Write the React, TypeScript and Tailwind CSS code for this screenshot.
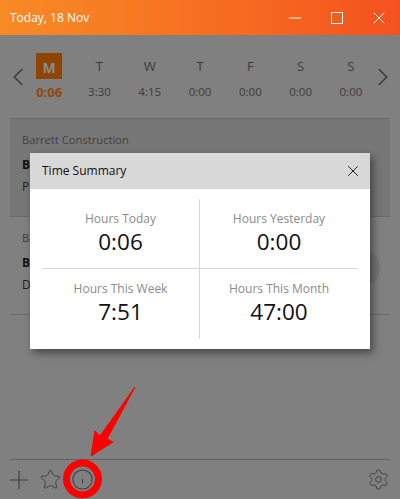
import { ChevronLeft, ChevronRight, Plus, Star, Info, Settings, X, Minus } from 'lucide-react';

const days = [
  { label: 'M', time: '0:06', active: true },
  { label: 'T', time: '3:30' },
  { label: 'W', time: '4:15' },
  { label: 'T', time: '0:00' },
  { label: 'F', time: '0:00' },
  { label: 'S', time: '0:00' },
  { label: 'S', time: '0:00' },
];

const summary = [
  { label: 'Hours Today', value: '0:06', cell: 'border-r border-b pt-[11px]' },
  { label: 'Hours Yesterday', value: '0:00', cell: 'border-b pt-[11px]' },
  { label: 'Hours This Week', value: '7:51', cell: 'border-r pt-[11px]' },
  { label: 'Hours This Month', value: '47:00', cell: 'pt-[11px]' },
];

function Entry({ title, bold, detail, shaded }: { title: string; bold: string; detail: string; shaded?: boolean }) {
  return (
    <div className={`h-[98px] border-b border-[#6a6a6a] px-3 pt-[12px] text-[11.2px] leading-[18px] ${shaded ? 'bg-[#777777]' : ''}`}>
      <div className="text-[#3f3f3f]">{title}</div>
      <div className="mt-[7px] text-[12px] font-bold text-[#111111]">{bold}</div>
      <div className="mt-[4px] text-[12px] text-[#1f1f1f]">{detail}</div>
    </div>
  );
}

export default function App() {
  return (
    <div className="relative flex h-[499px] w-[400px] flex-col overflow-hidden bg-[#808080] font-['Open_Sans','Noto_Sans',sans-serif]">
      {/* Title bar */}
      <header className="flex h-[35px] items-center justify-between bg-gradient-to-r from-[#f78b25] to-[#f4511e] pl-[10px] text-white">
        <span className="text-[12px]">Today, 18 Nov</span>
        <div className="flex items-center">
          <div className="flex w-[42px] justify-center"><Minus size={20} strokeWidth={1.2} /></div>
          <div className="flex w-[42px] justify-center"><div className="h-[12px] w-[12px] border border-white" /></div>
          <div className="flex w-[42px] justify-center"><X size={20} strokeWidth={1.2} /></div>
        </div>
      </header>

      {/* Week strip */}
      <div className="flex h-[83px] items-start pt-[18px] text-[#3c3c3c]">
        <ChevronLeft size={30} strokeWidth={1.3} className="mt-[9px] ml-[3px] shrink-0" />
        <div className="ml-[-9px] flex shrink-0">
          {days.map((day, i) => (
            <div key={i} className="flex w-[50.3px] flex-col items-center">
              <div className={`flex h-[26px] w-[26px] items-center justify-center pt-[2px] ${day.active ? 'bg-[#8f4500] text-[14px] font-bold text-[#8c8c8c]' : 'text-[13px]'}`}>
                {day.label}
              </div>
              <div className={`mt-[4px] leading-[18px] ${day.active ? 'text-[13px] font-bold text-[#8d4a10]' : 'text-[11.5px]'}`}>{day.time}</div>
            </div>
          ))}
        </div>
        <ChevronRight size={30} strokeWidth={1.3} className="mt-[9px] ml-[-8px] shrink-0" />
      </div>

      {/* Entries */}
      <div className="relative mx-[10px] border-t border-[#6a6a6a]">
        <Entry title="Barrett Construction" bold="B" detail="P" shaded />
        <Entry title="Ba" bold="B" detail="D" />
        <div className="absolute left-[334px] top-[131px] h-[36px] w-[36px] rounded-full bg-[#757575]" />
      </div>

      {/* Footer */}
      <div className="mx-[10px] mt-auto flex h-[40px] items-center border-t border-[#626262] text-[#3f3f3f]">
        <Plus size={30} strokeWidth={0.9} className="ml-[-6px]" />
        <Star size={23} strokeWidth={1} className="ml-[4.5px]" />
        <Info size={23} strokeWidth={1.1} className="ml-[9.5px]" />
        <Settings size={23} strokeWidth={1} className="ml-auto" />
      </div>

      {/* Annotation */}
      <svg className="absolute left-0 top-[379px]" width="140" height="120" viewBox="0 0 140 120" fill="none">
        <path d="M135 8 L100 57 L95 52 L91 77 L113 63 L107 60 Z" fill="#fe0000" stroke="#fe0000" strokeLinejoin="round" />
        <circle cx="82.5" cy="100" r="16" stroke="#fe0000" strokeWidth="7" />
      </svg>

      {/* Dialog */}
      <div className="absolute left-[30px] top-[153px] w-[340px] bg-white shadow-[3px_4px_8px_rgba(0,0,0,0.45)]">
        <div className="flex h-[36px] items-center justify-between bg-[#d8d8d8] pl-3 pr-[8px] text-[#111111]">
          <span className="text-[12px] font-medium">Time Summary</span>
          <X size={18} strokeWidth={1.2} />
        </div>
        <div className="mx-3 my-[10px] grid grid-cols-2">
          {summary.map((item) => (
            <div key={item.label} className={`flex h-[70px] flex-col items-center border-[#d8d8d8] ${item.cell}`}>
              <span className="text-[12px] leading-[18px] text-[#8a8a8a]">{item.label}</span>
              <span className="text-[22.5px] leading-[28px] text-[#111111]">{item.value}</span>
            </div>
          ))}
        </div>
      </div>
    </div>
  );
}
